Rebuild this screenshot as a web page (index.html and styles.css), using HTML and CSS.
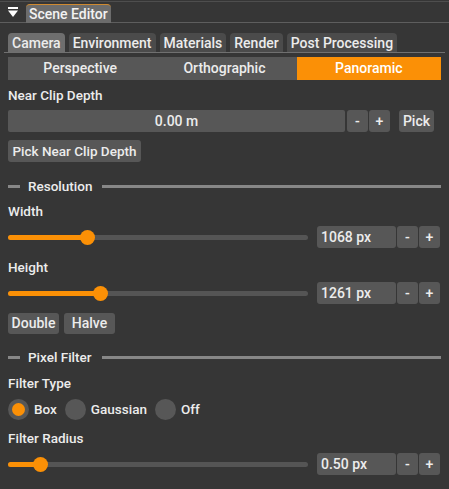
FILE: index.html
```html
<!DOCTYPE html>
<html>
<head>
<meta charset="utf-8">
<link rel="stylesheet" href="styles.css">
</head>
<body>
<div class="window">
  <div class="titlebar">
    <svg class="collapse" width="10" height="10" viewBox="0 0 10 10"><rect x="0" y="0" width="10" height="2" fill="#fff"/><polygon points="0,3.5 10,3.5 5,10" fill="#fff"/></svg>
    <div class="title-tab">Scene Editor</div>
  </div>
  <div class="content">
    <div class="tabs">
      <div class="tab active">Camera</div>
      <div class="tab">Environment</div>
      <div class="tab">Materials</div>
      <div class="tab">Render</div>
      <div class="tab">Post Processing</div>
    </div>
    <div class="seg">
      <div class="seg-item">Perspective</div>
      <div class="seg-item">Orthographic</div>
      <div class="seg-item on">Panoramic</div>
    </div>
    <div class="label l1">Near Clip Depth</div>
    <div class="row r1">
      <div class="field">0.00 m</div>
      <div class="btn sm">-</div>
      <div class="btn sm">+</div>
      <div class="btn pick">Pick</div>
    </div>
    <div class="btn wide b1">Pick Near Clip Depth</div>

    <div class="sep s1"><span class="sep-short"></span><span class="sep-text">Resolution</span><span class="sep-long"></span></div>
    <div class="label l2">Width</div>
    <div class="row slider-row">
      <div class="slider"><div class="track"></div><div class="fill" style="width:79px"></div><div class="knob" style="left:72px"></div></div>
      <div class="value">1068 px</div>
      <div class="btn sm2">-</div>
      <div class="btn sm2">+</div>
    </div>
    <div class="label l3">Height</div>
    <div class="row slider-row">
      <div class="slider"><div class="track"></div><div class="fill" style="width:92px"></div><div class="knob" style="left:85px"></div></div>
      <div class="value">1261 px</div>
      <div class="btn sm2">-</div>
      <div class="btn sm2">+</div>
    </div>
    <div class="row b2">
      <div class="btn small">Double</div>
      <div class="btn small">Halve</div>
    </div>

    <div class="sep s2"><span class="sep-short"></span><span class="sep-text">Pixel Filter</span><span class="sep-long"></span></div>
    <div class="label l4">Filter Type</div>
    <div class="radios">
      <div class="radio on"><span class="circle"><span class="dot"></span></span>Box</div>
      <div class="radio"><span class="circle"></span>Gaussian</div>
      <div class="radio"><span class="circle"></span>Off</div>
    </div>
    <div class="label l5">Filter Radius</div>
    <div class="row slider-row">
      <div class="slider"><div class="track"></div><div class="fill" style="width:32px"></div><div class="knob" style="left:25px"></div></div>
      <div class="value">0.50 px</div>
      <div class="btn sm2">-</div>
      <div class="btn sm2">+</div>
    </div>
  </div>
</div>
</body>
</html>
```
FILE: styles.css
```css
html, body {
  margin: 0;
  padding: 0;
}
body {
  width: 449px;
  height: 489px;
  background: #363636;
  font-family: Roboto, "Noto Sans", sans-serif;
  font-weight: 500;
  font-size: 14px;
  color: #ececec;
  overflow: hidden;
}
.window {
  border-top: 1px solid #4e4e4e;
  margin-top: 1px;
}
.titlebar {
  height: 20px;
  border-bottom: 1px solid #5e5e5e;
  display: flex;
  align-items: flex-end;
  padding-left: 8px;
}
.collapse {
  margin-bottom: 5px;
  margin-right: 8px;
}
.title-tab {
  height: 18px;
  line-height: 18px;
  padding: 0 4px 0 3px;
  background: #6c6c6c;
  border-top: 1px solid #d08a30;
  border-radius: 4px 4px 0 0;
  color: #f2f2f2;
  margin-bottom: -1px;
  width: 78px;
  white-space: nowrap;
}
.content {
  padding: 0 8px;
}
.tabs {
  margin: 10px -4px 0;
  padding: 0 4px;
  display: flex;
  gap: 4px;
  border-bottom: 1px solid #707070;
}
.tab {
  height: 19px;
  line-height: 20px;
  padding: 0 4px;
  background: #4b4b4b;
  border-radius: 4px 4px 0 0;
}
.tab.active {
  background: #6e6e6e;
}
.seg {
  margin-top: 4px;
  height: 23px;
  display: flex;
  background: #575757;
}
.seg-item {
  flex: 1;
  text-align: center;
  line-height: 23px;
}
.seg-item.on {
  background: #fb9006;
  color: #fff;
}
.label {
  height: 16px;
  line-height: 16px;
  font-size: 13.5px;
}
.l1 { margin-top: 7px; }
.l2 { margin-top: 9px; }
.l3 { margin-top: 11px; }
.l4 { margin-top: 10px; }
.l5 { margin-top: 10px; }
.row {
  display: flex;
  align-items: center;
}
.r1 {
  margin-top: 7px;
  height: 22px;
}
.field {
  width: 337px;
  height: 22px;
  line-height: 22px;
  background: #575757;
  border-radius: 2px;
  text-align: center;
}
.btn {
  height: 22px;
  line-height: 22px;
  background: #575757;
  border-radius: 3px;
  text-align: center;
  box-sizing: border-box;
  white-space: nowrap;
}
.sm {
  width: 21px;
  margin-left: 1px;
}
.field + .sm { margin-left: 2px; }
.pick {
  width: 35px;
  margin-left: 9px;
}
.wide {
  margin-top: 8px;
  width: 133px;
  font-size: 13.5px;
}
.sep {
  height: 16px;
  display: flex;
  align-items: center;
}
.s1 { margin-top: 16px; }
.s2 { margin-top: 15px; }
.sep-short {
  width: 12px;
  height: 3px;
  background: #878787;
}
.sep-text {
  margin: 0 10px 0 8px;
  font-size: 13.5px;
}
.sep-long {
  flex: 1;
  height: 3px;
  background: #878787;
}
.slider-row {
  margin-top: 7px;
  height: 22px;
}
.slider {
  position: relative;
  width: 300px;
  height: 22px;
  margin-right: 9px;
}
.track {
  position: absolute;
  left: 0;
  right: 0;
  top: 9px;
  height: 5px;
  border-radius: 3px;
  background: #555555;
}
.fill {
  position: absolute;
  left: 0;
  top: 9px;
  height: 5px;
  border-radius: 3px;
  background: #fb9006;
}
.knob {
  position: absolute;
  top: 4px;
  width: 15px;
  height: 15px;
  border-radius: 50%;
  background: #fb9006;
}
.value {
  width: 75px;
  height: 22px;
  line-height: 22px;
  padding-left: 4px;
  background: #575757;
  border-radius: 3px;
}
.sm2 {
  width: 21px;
  margin-left: 1px;
}
.b2 {
  margin-top: 9px;
  gap: 5px;
}
.small {
  width: 51px;
  height: 21px;
  line-height: 21px;
}
.radios {
  margin-top: 7px;
  height: 22px;
  display: flex;
  align-items: center;
  font-size: 13.5px;
}
.radio {
  display: flex;
  align-items: center;
  margin-right: 8px;
}
.circle {
  width: 21px;
  height: 21px;
  border-radius: 50%;
  background: #575757;
  margin-right: 5px;
  display: flex;
  align-items: center;
  justify-content: center;
}
.dot {
  width: 13px;
  height: 13px;
  border-radius: 50%;
  background: #fb9006;
}
```
